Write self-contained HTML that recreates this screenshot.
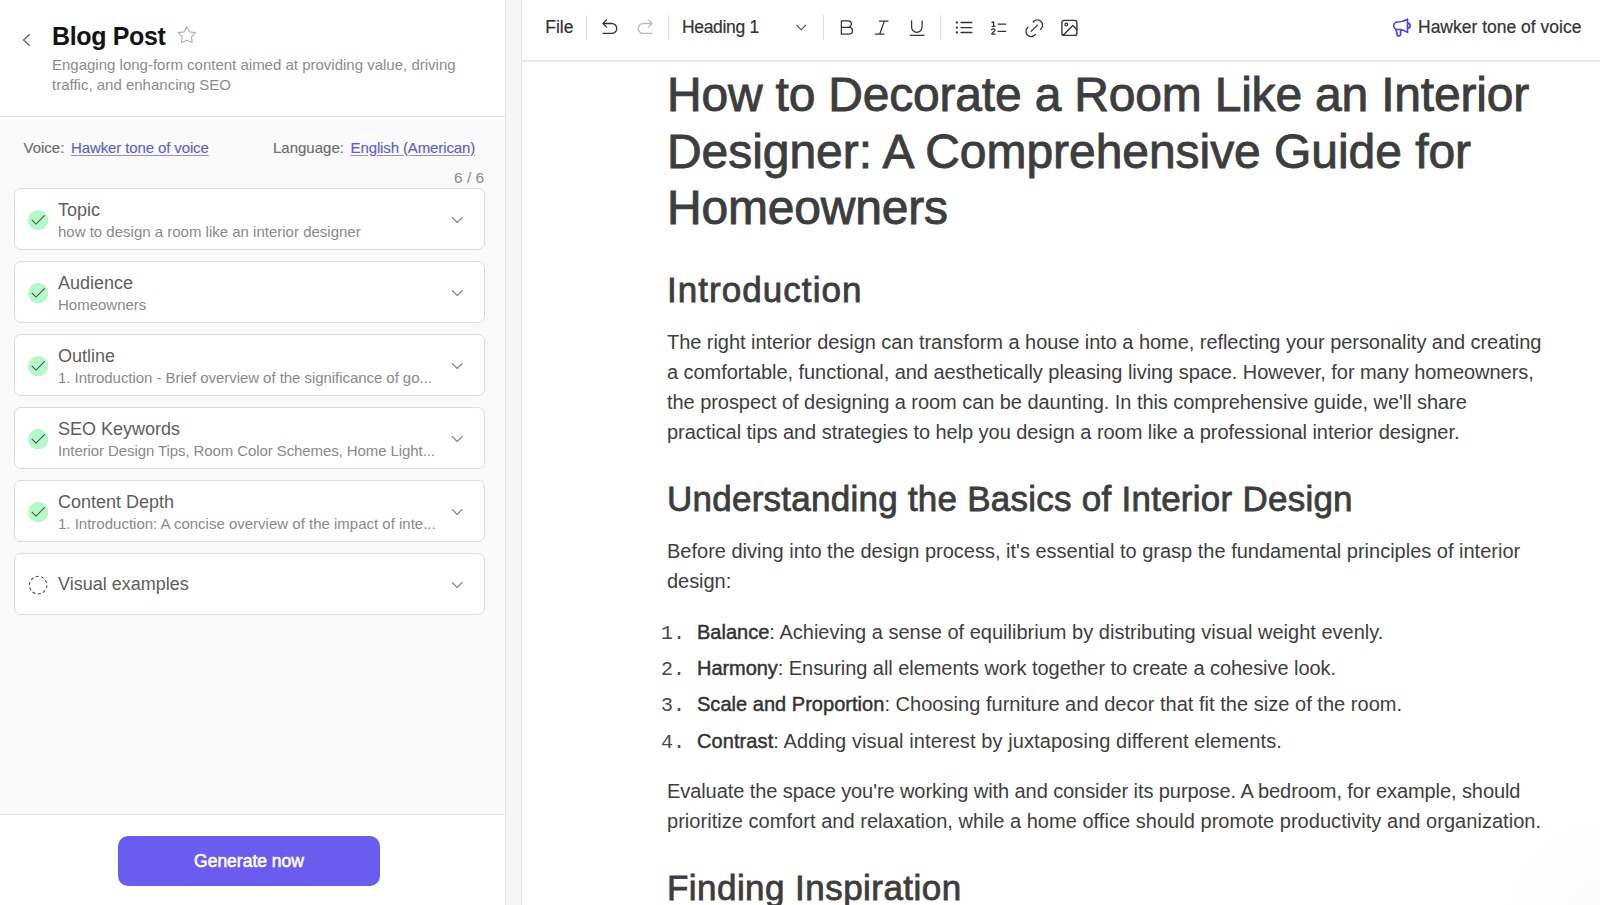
<!DOCTYPE html>
<html><head><meta charset="utf-8">
<style>
*{box-sizing:border-box;margin:0;padding:0}
html,body{width:1600px;height:905px;overflow:hidden;background:#fff;font-family:"Liberation Sans",sans-serif;color:#333}
.abs{position:absolute;white-space:nowrap}
.left{position:absolute;left:0;top:0;width:506px;height:905px;background:#fafafa;border-right:1px solid #e2e2e2}
.hdr{position:absolute;left:0;top:0;width:505px;height:117px;background:#fff;border-bottom:1px solid #e2e2e2}
.title{left:52px;top:23.6px;font-size:25px;line-height:25px;font-weight:bold;color:#141414;letter-spacing:-0.35px}
.sub{left:52px;top:54.6px;font-size:15px;line-height:20.5px;color:#8c8c8c}
.meta{top:139.6px;font-size:15px;line-height:15px;color:#6b6b6b;-webkit-text-stroke:0.15px #6b6b6b}
.meta span{margin-left:2.5px;letter-spacing:-0.12px;color:#5d5ae6;text-decoration:underline;text-decoration-color:#8f8cf0;text-underline-offset:2px}
.count{left:454px;top:169.5px;font-size:15.5px;line-height:15.5px;color:#8a8a8a}
.card{position:absolute;left:14px;width:471px;height:62px;background:#fff;border:1px solid #dcdcdc;border-radius:7px}
.card .ck{position:absolute;left:12.9px;top:21px;width:20.3px;height:20.3px}
.card .t{position:absolute;left:43px;top:11.5px;font-size:18px;line-height:18px;color:#5e5e5e;white-space:nowrap}
.card .s{position:absolute;left:43px;top:35.3px;font-size:15px;line-height:15px;color:#8a8a8a;white-space:nowrap}
.card .chev{position:absolute;left:436px;top:27px}
.foot{position:absolute;left:0;top:814px;width:505px;height:91px;background:#fff;border-top:1px solid #e2e2e2}
.btn{position:absolute;left:118px;top:21px;width:262px;height:50px;background:#6a5cef;border-radius:10px;color:#fff;font-size:17.5px;font-weight:normal;-webkit-text-stroke:0.55px #fff;text-align:center;line-height:50px}
.gap{position:absolute;left:506px;top:0;width:16px;height:905px;background:#f6f6f6;border-right:1px solid #e2e2e2}
.editor{position:absolute;left:522px;top:0;width:1078px;height:905px;background:#fff}
.tb{position:absolute;left:0;top:0;width:1078px;height:62px;border-bottom:2px solid #e8e8e8}
.tbt{font-size:17.5px;line-height:17.5px;color:#333;top:19.3px;-webkit-text-stroke:0.2px #333}
.sep{position:absolute;top:15px;width:1px;height:25px;background:#dcdcdc}
.ic{position:absolute}
.doc{color:#3d3d3d}
.h1{font-size:48px;line-height:56.5px;left:667px;-webkit-text-stroke:0.9px #3d3d3d}
.h2{font-size:35px;line-height:44px;left:667px;-webkit-text-stroke:0.8px #3d3d3d}
.p{font-size:20px;line-height:30px;left:667px;letter-spacing:-0.05px;color:#3e3e3e}
.li{font-size:20px;line-height:30px;left:697px;letter-spacing:-0.05px;color:#3e3e3e}
.li b{font-weight:normal;-webkit-text-stroke:0.45px #333;color:#333}
.num{font-family:"Liberation Mono",monospace;font-size:20px;line-height:30px;left:661px;color:#4a4a4a;margin-top:2px}
</style></head><body>
<div class="left">
  <div class="hdr">
        <div class="abs title">Blog Post</div>
        <div class="abs sub">Engaging long-form content aimed at providing value, driving<br>traffic, and enhancing SEO</div>
  </div>
  <div class="abs meta" style="left:23.5px">Voice: <span>Hawker tone of voice</span></div>
  <div class="abs meta" style="left:273px">Language: <span>English (American)</span></div>
  <div class="abs count">6 / 6</div>
  <div class="card" style="top:188px"><svg class="ck" viewBox="0 0 20 20"><circle cx="10" cy="10" r="10" fill="#b4f9c8"/><path d="M3.7 9.8 L7.9 13.9 L16.4 5.4" fill="none" stroke="#4a4a4a" stroke-width="1"/></svg><div class="t">Topic</div><div class="s">how to design a room like an interior designer</div></div>
  <div class="card" style="top:261px"><svg class="ck" viewBox="0 0 20 20"><circle cx="10" cy="10" r="10" fill="#b4f9c8"/><path d="M3.7 9.8 L7.9 13.9 L16.4 5.4" fill="none" stroke="#4a4a4a" stroke-width="1"/></svg><div class="t">Audience</div><div class="s">Homeowners</div></div>
  <div class="card" style="top:334px"><svg class="ck" viewBox="0 0 20 20"><circle cx="10" cy="10" r="10" fill="#b4f9c8"/><path d="M3.7 9.8 L7.9 13.9 L16.4 5.4" fill="none" stroke="#4a4a4a" stroke-width="1"/></svg><div class="t">Outline</div><div class="s" style="letter-spacing:-0.05px">1. Introduction - Brief overview of the significance of go...</div></div>
  <div class="card" style="top:407px"><svg class="ck" viewBox="0 0 20 20"><circle cx="10" cy="10" r="10" fill="#b4f9c8"/><path d="M3.7 9.8 L7.9 13.9 L16.4 5.4" fill="none" stroke="#4a4a4a" stroke-width="1"/></svg><div class="t">SEO Keywords</div><div class="s" style="letter-spacing:-0.09px">Interior Design Tips, Room Color Schemes, Home Light...</div></div>
  <div class="card" style="top:480px"><svg class="ck" viewBox="0 0 20 20"><circle cx="10" cy="10" r="10" fill="#b4f9c8"/><path d="M3.7 9.8 L7.9 13.9 L16.4 5.4" fill="none" stroke="#4a4a4a" stroke-width="1"/></svg><div class="t">Content Depth</div><div class="s">1. Introduction: A concise overview of the impact of inte...</div></div>
  <div class="card" style="top:553px"><svg class="ck" viewBox="0 0 20 20"><circle cx="10" cy="10" r="8.6" fill="none" stroke="#555" stroke-width="1.1" stroke-dasharray="3 2.4"/></svg><div class="t" style="top:21.4px">Visual examples</div></div>
  <div class="foot"><div class="btn">Generate now</div></div>
</div>
<div class="gap"></div>
<div style="position:absolute;left:1480px;top:785px;width:120px;height:120px;background:radial-gradient(circle at 130px 140px, rgba(0,0,0,0.018) 0, rgba(0,0,0,0.01) 60px, rgba(0,0,0,0) 110px)"></div>
<div class="tb" style="position:absolute;left:522px;top:0;width:1078px;height:62px"></div>
<div class="abs tbt" style="left:545.3px">File</div>
<div class="abs tbt" style="left:681.9px;letter-spacing:-0.3px">Heading 1</div>
<div class="abs tbt" style="left:1418px">Hawker tone of voice</div>
<svg style="position:absolute;left:0;top:0;z-index:5" width="1600" height="905" viewBox="0 0 1600 905">
<path d="M29.2 34.7 L23.6 40.1 L29.2 45.3" stroke="#666" stroke-width="1.4" fill="none" stroke-linecap="round" stroke-linejoin="round"/>
<path d="M186.8 27.1 L189.6 31.9 L195.4 32.6 L191.5 36.9 L192.2 42.5 L186.8 40.2 L181.4 42.5 L182.1 36.9 L178.2 32.6 L184 31.9 Z" stroke="#b3b3b3" stroke-width="1.15" fill="none" stroke-linecap="round" stroke-linejoin="round"/>
<path d="M452.3 217.5 L457.2 222.5 L462.1 217.5" stroke="#888" stroke-width="1.1" fill="none" stroke-linecap="round" stroke-linejoin="round"/>
<path d="M452.3 290.5 L457.2 295.5 L462.1 290.5" stroke="#888" stroke-width="1.1" fill="none" stroke-linecap="round" stroke-linejoin="round"/>
<path d="M452.3 363.5 L457.2 368.5 L462.1 363.5" stroke="#888" stroke-width="1.1" fill="none" stroke-linecap="round" stroke-linejoin="round"/>
<path d="M452.3 436.5 L457.2 441.5 L462.1 436.5" stroke="#888" stroke-width="1.1" fill="none" stroke-linecap="round" stroke-linejoin="round"/>
<path d="M452.3 509.5 L457.2 514.5 L462.1 509.5" stroke="#888" stroke-width="1.1" fill="none" stroke-linecap="round" stroke-linejoin="round"/>
<path d="M452.3 582.5 L457.2 587.5 L462.1 582.5" stroke="#888" stroke-width="1.1" fill="none" stroke-linecap="round" stroke-linejoin="round"/>
<path d="M606.6 19.9 L602.9 23.5 L606.6 27.1 M602.9 23.5 H611.8 A4.95 4.95 0 0 1 611.8 33.4 H602.9" stroke="#333" stroke-width="1.3" fill="none" stroke-linecap="round" stroke-linejoin="round"/>
<path d="M648.4 19.9 L652.1 23.5 L648.4 27.1 M652.1 23.5 H643.2 A4.95 4.95 0 0 0 643.2 33.4 H652.1" stroke="#bdbdbd" stroke-width="1.3" fill="none" stroke-linecap="round" stroke-linejoin="round"/>
<rect x="586.0" y="15.3" width="1" height="24.4" fill="#dedede"/>
<rect x="668.0" y="15.3" width="1" height="24.4" fill="#dedede"/>
<rect x="823.0" y="15.3" width="1" height="24.4" fill="#dedede"/>
<rect x="940.0" y="15.3" width="1" height="24.4" fill="#dedede"/>
<path d="M796.8 25.2 L801.2 29.8 L805.6 25.2" stroke="#555" stroke-width="1.2" fill="none" stroke-linecap="round" stroke-linejoin="round"/>
<path d="M841.4 20.9 H848.2 A3.2 3.2 0 0 1 848.2 27.3 H841.4 Z M841.4 27.3 H849 A3.45 3.45 0 0 1 849 34.2 H841.4 Z" stroke="#333" stroke-width="1.25" fill="none" stroke-linecap="round" stroke-linejoin="round"/>
<path d="M879.4 21.1 H888 M875.4 34.2 H884 M884.4 21.1 L879.6 34.2" stroke="#333" stroke-width="1.25" fill="none" stroke-linecap="round" stroke-linejoin="round"/>
<path d="M911.6 20.8 V27 A5.25 5.25 0 0 0 922.1 27 V20.8 M910.2 35.3 H923.9" stroke="#333" stroke-width="1.25" fill="none" stroke-linecap="round" stroke-linejoin="round"/>
<circle cx="956.9" cy="22.5" r="1.15" fill="#333"/>
<path d="M961 22.5 H971.8" stroke="#333" stroke-width="1.3" fill="none" stroke-linecap="round" stroke-linejoin="round"/>
<circle cx="956.9" cy="27.6" r="1.15" fill="#333"/>
<path d="M961 27.6 H971.8" stroke="#333" stroke-width="1.3" fill="none" stroke-linecap="round" stroke-linejoin="round"/>
<circle cx="956.9" cy="32.5" r="1.15" fill="#333"/>
<path d="M961 32.5 H971.8" stroke="#333" stroke-width="1.3" fill="none" stroke-linecap="round" stroke-linejoin="round"/>
<path d="M992 22.6 L993.6 21.7 V26.3 M992.1 26.3 H995 M991.7 29.8 C992.2 28.5 994.9 28.6 994.9 30.2 C994.9 31.4 992.3 32.5 991.7 34 H995.2 M998 24 H1005.7 M998 31.4 H1005.7" stroke="#333" stroke-width="1.25" fill="none" stroke-linecap="round" stroke-linejoin="round"/>
<g transform="translate(1021.8,15.8) scale(1.04)"><path d="M9 15l6 -6 M11 6l.463 -.536a5 5 0 0 1 7.071 7.072l-.534 .464 M13 18l-.397 .534a5.068 5.068 0 0 1 -7.127 0a4.972 4.972 0 0 1 0 -7.071l.524 -.463" stroke="#333" stroke-width="1.25" fill="none" stroke-linecap="round" stroke-linejoin="round"/></g>
<rect x="1061.9" y="20.4" width="15" height="15" rx="2.2" stroke="#333" stroke-width="1.4" fill="none"/>
<circle cx="1066.3" cy="24.6" r="1.4" stroke="#333" stroke-width="1.2" fill="none"/>
<path d="M1063.2 35.2 L1072.8 25.6 L1076.8 29.6" stroke="#333" stroke-width="1.4" fill="none" stroke-linecap="round" stroke-linejoin="round"/>
<path d="M1397.5 22 C1400.5 22 1403.5 21.6 1407.5 19.2 V32.4 C1404 30.2 1402.5 29.5 1400 29.5 H1397.5 A3.75 3.75 0 0 1 1397.5 22 Z M1407.5 23.2 A2.6 2.6 0 0 1 1407.5 28.4 M1395.9 29.5 L1397.1 34.2 A1.75 1.75 0 0 0 1400.6 34.2 V29.5" stroke="#4d43ee" stroke-width="1.7" fill="none" stroke-linecap="round" stroke-linejoin="round"/>
</svg>

<div class="doc">
  <div class="abs h1" style="top:67.4px;letter-spacing:-0.2px">How to Decorate a Room Like an Interior<br><span style="letter-spacing:-0.05px">Designer: A Comprehensive Guide for</span><br>Homeowners</div>
  <div class="abs h2" style="top:267.9px;letter-spacing:1.05px">Introduction</div>
  <div class="abs p" style="top:326.8px">The right interior design can transform a house into a home, reflecting your personality and creating<br>a comfortable, functional, and aesthetically pleasing living space. However, for many homeowners,<br>the prospect of designing a room can be daunting. In this comprehensive guide, we'll share<br>practical tips and strategies to help you design a room like a professional interior designer.</div>
  <div class="abs h2" style="top:477.4px;letter-spacing:0.25px">Understanding the Basics of Interior Design</div>
  <div class="abs p" style="top:535.8px"><span style="letter-spacing:0px">Before diving into the design process, it's essential to grasp the fundamental principles of interior</span><br>design:</div>
  <div class="abs num" style="top:616.6px">1.</div>
  <div class="abs li" style="top:616.6px;letter-spacing:0.01px"><b>Balance</b>: Achieving a sense of equilibrium by distributing visual weight evenly.</div>
  <div class="abs num" style="top:652.8px">2.</div>
  <div class="abs li" style="top:652.8px"><b>Harmony</b>: Ensuring all elements work together to create a cohesive look.</div>
  <div class="abs num" style="top:688.9px">3.</div>
  <div class="abs li" style="top:688.9px;letter-spacing:0.03px"><b>Scale and Proportion</b>: Choosing furniture and decor that fit the size of the room.</div>
  <div class="abs num" style="top:725.7px">4.</div>
  <div class="abs li" style="top:725.7px;letter-spacing:0.09px"><b>Contrast</b>: Adding visual interest by juxtaposing different elements.</div>
  <div class="abs p" style="top:776.1px"><span style="letter-spacing:-0.08px">Evaluate the space you're working with and consider its purpose. A bedroom, for example, should</span><br><span style="letter-spacing:0.04px">prioritize comfort and relaxation, while a home office should promote productivity and organization.</span></div>
  <div class="abs h2" style="top:865.9px;letter-spacing:0.45px">Finding Inspiration</div>
</div>
</body></html>
